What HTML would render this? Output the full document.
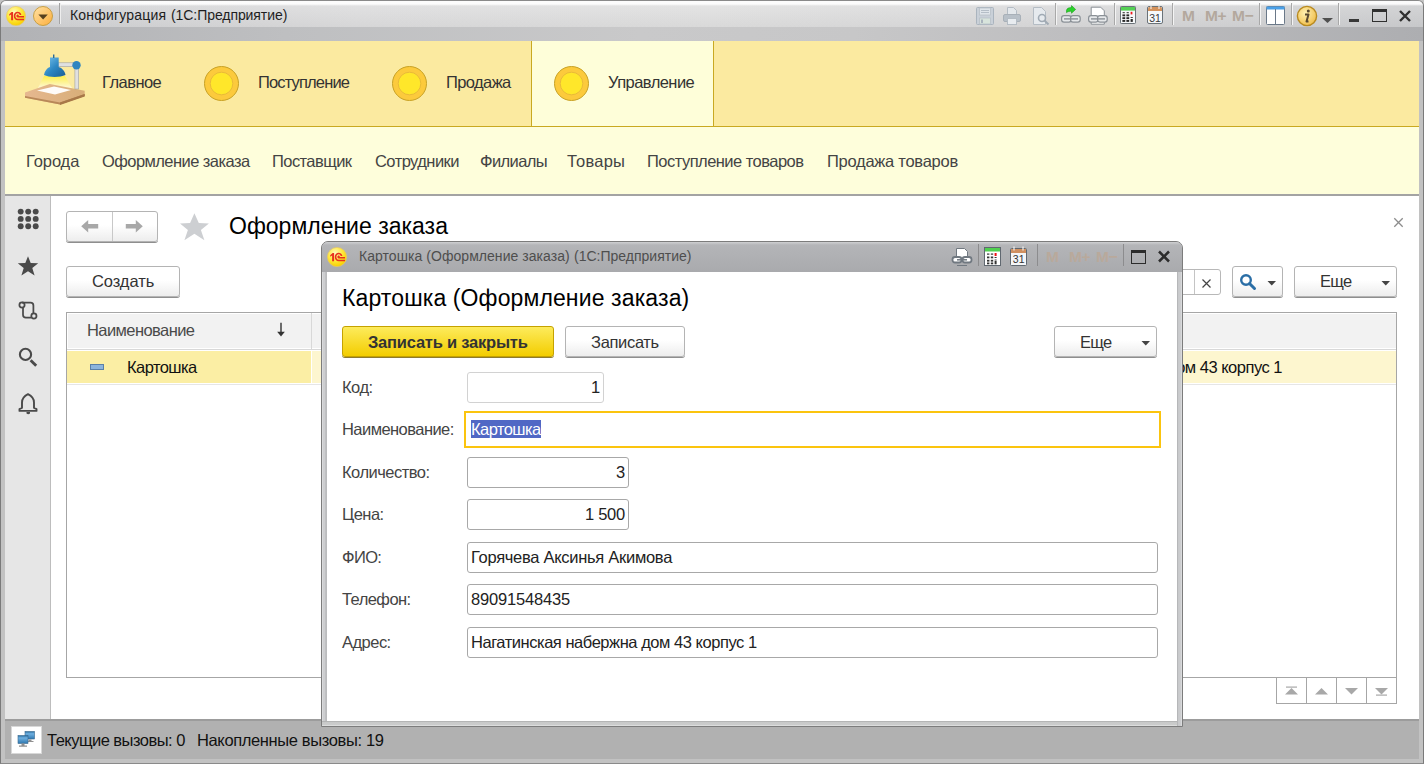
<!DOCTYPE html>
<html><head><meta charset="utf-8">
<style>
*{margin:0;padding:0;box-sizing:border-box}
html,body{width:1424px;height:764px;overflow:hidden}
body{position:relative;background:#c4c4c4;font-family:"Liberation Sans",sans-serif;color:#333}
.a{position:absolute}
.t{position:absolute;white-space:nowrap;line-height:1}
.btn{border:1px solid #b4b4b4;border-radius:3px;background:linear-gradient(#fff 0,#fff 45%,#ededed 100%);box-shadow:0 1px 0 #8e8e8e}
</style></head><body>
<!-- window frame -->
<div class="a" style="left:0;top:0;width:1424px;height:764px;background:#c2c2c2;border-left:1px solid #7a7a7a;border-right:1px solid #7a7a7a;border-top:1px solid #8a8a8a;border-bottom:1px solid #8a8a8a;border-radius:6px 6px 0 0"></div>
<!-- title bar -->
<div class="a" style="left:1px;top:1px;width:1422px;height:26px;border-radius:5px 5px 0 0;background:linear-gradient(rgba(255,255,255,0.9) 0,rgba(255,255,255,0.9) 3px,rgba(255,255,255,0) 5px,rgba(255,255,255,0) 100%),linear-gradient(rgba(255,255,255,0.12),rgba(0,0,0,0.04)),linear-gradient(90deg,#d2d3d5 0%,#dfdfe0 25%,#e2e2e2 50%,#dcdcdd 75%,#cfd0d2 100%)"></div>
<div class="a" style="left:1px;top:27px;width:1422px;height:14px;background:linear-gradient(90deg,#b1b2b5 0%,#bebfc1 20%,#c9c9ca 45%,#c7c7c8 60%,#bbbbbd 80%,#adaeb1 100%)"></div>


<!-- title bar content -->
<svg class="a" style="left:0px;top:0px" width="32" height="32" viewBox="0 0 32 32">
 <defs><radialGradient id="g1c" cx="40%" cy="30%" r="70%"><stop offset="0" stop-color="#fffbc0"/><stop offset="0.55" stop-color="#ffe83c"/><stop offset="1" stop-color="#f8d000"/></radialGradient></defs>
 <circle cx="16" cy="16" r="9.6" fill="url(#g1c)" stroke="#e6c866" stroke-width="0.7"/>
 <g fill="#e8321e">
 <path d="M9.2 14.2 L11.6 12 L13.1 12 L13.1 20.2 L11.1 20.2 L11.1 14.6 L9.2 15.7 Z"/>
 <path d="M21.4 15 C21 12.8 19.3 11.8 17.6 11.8 C15.2 11.8 13.8 13.8 13.8 16 C13.8 18.4 15.4 20.2 17.6 20.2 L24 20.2 L24 18.8 L17.6 18.8 C16.3 18.8 15.4 17.6 15.4 16 C15.4 14.5 16.3 13.3 17.6 13.3 C18.6 13.3 19.4 13.9 19.7 15 Z"/>
 <path d="M17.7 14.6 C16.9 14.6 16.4 15.2 16.4 16 C16.4 16.8 16.9 17.4 17.7 17.4 L24 17.4 L24 16.1 L18.9 16.1 C18.8 15.2 18.3 14.6 17.7 14.6 Z"/>
 </g>
</svg>
<svg class="a" style="left:27px;top:0px" width="32" height="32" viewBox="27 0 32 32">
 <defs><linearGradient id="gdd" x1="0" y1="0" x2="1" y2="1"><stop offset="0" stop-color="#ffe2a6"/><stop offset="1" stop-color="#fcae3c"/></linearGradient></defs>
 <circle cx="43" cy="16" r="9.5" fill="url(#gdd)" stroke="#c49a3a" stroke-width="0.9"/>
 <path d="M38.4 14.6 L47.8 14.6 L43.1 19.4 Z" fill="#56401e"/>
</svg>
<div class="a" style="left:59px;top:3px;width:1px;height:21px;background:#a4a4a4"></div><div class="a" style="left:60px;top:3px;width:1px;height:21px;background:#eeeeee"></div>
<div class="t" style="left:70px;top:8px;font-size:14px;color:#1e1e1e;letter-spacing:0.2px">Конфигурация</div>
<div class="t" style="left:171px;top:8px;font-size:14px;color:#1e1e1e;letter-spacing:-0.07px">(1С:Предприятие)</div>


<!-- title toolbar icons -->
<svg class="a" style="left:975px;top:6px" width="20" height="20" viewBox="0 0 20 20">
 <rect x="1.5" y="1.5" width="17" height="17" rx="1" fill="#c9d0d8" stroke="#aab4be"/>
 <rect x="4.5" y="2" width="11" height="7" fill="#dfe5ea" stroke="#b8c0c8" stroke-width="0.8"/>
 <path d="M6 4.5h8M6 6.5h8" stroke="#aab4be" stroke-width="0.8"/>
 <rect x="4.5" y="12" width="11" height="6" fill="#d8e4dc" stroke="#b8c0c8" stroke-width="0.8"/>
 <rect x="6" y="13.5" width="2" height="3.5" fill="#aab4be"/>
</svg>
<svg class="a" style="left:1002px;top:6px" width="20" height="20" viewBox="0 0 20 20">
 <path d="M5.5 1.5h6l3 3v5h-9z" fill="#e4e8ec" stroke="#b4bcc4"/>
 <rect x="1.5" y="8.5" width="17" height="7" rx="1.5" fill="#b8c0c8" stroke="#a8b0b8"/>
 <rect x="5.5" y="12.5" width="9" height="6" fill="#e8ecf0" stroke="#b4bcc4"/>
</svg>
<svg class="a" style="left:1031px;top:6px" width="20" height="20" viewBox="0 0 20 20">
 <path d="M2.5 1.5h8l4 4v13h-12z" fill="#e6eaee" stroke="#b4bcc4"/>
 <circle cx="11" cy="12" r="3.5" fill="none" stroke="#a0aab4" stroke-width="1.6"/>
 <path d="M13.5 14.5l4 4" stroke="#a0aab4" stroke-width="2"/>
</svg>
<div class="a" style="left:1055px;top:3px;width:2px;height:22px;background:linear-gradient(90deg,#a8a8a8 50%,#f4f4f4 50%)"></div>
<div class="a" style="left:1114px;top:3px;width:2px;height:22px;background:linear-gradient(90deg,#a8a8a8 50%,#f4f4f4 50%)"></div>
<svg class="a" style="left:1055px;top:2px" width="115" height="26" viewBox="1055 2 115 26">
 <path d="M1066.5 10.2 C1067 8.2 1069 7.6 1071.5 7.6 L1071.5 5.6 L1075.6 9.4 L1071.5 13.2 L1071.5 11.2 C1069.5 11.2 1067.8 11.6 1066.5 12.6 Z" fill="#2ad22a" stroke="#16a016" stroke-width="0.6"/>
 <g fill="#e6e8ea" stroke="#8a9096" stroke-width="1.2">
  <rect x="1061.6" y="15.6" width="9.6" height="6.6" rx="2.4"/><rect x="1070.6" y="15.6" width="9.6" height="6.6" rx="2.4"/>
 </g>
 <path d="M1064 18.9h14" stroke="#8a9096" stroke-width="1.4"/>
 <path d="M1091.2 7.2h9.5l3.6 3.6v13.4h-13.1z" fill="#fff" stroke="#8a9096" stroke-width="1"/>
 <g fill="#e6e8ea" stroke="#8a9096" stroke-width="1.2">
  <rect x="1088.6" y="15.6" width="9.6" height="6.6" rx="2.4"/><rect x="1097.6" y="15.6" width="9.6" height="6.6" rx="2.4"/>
 </g>
 <path d="M1091 18.9h14" stroke="#8a9096" stroke-width="1.4"/>
 <rect x="1120.5" y="6.5" width="15" height="17" rx="0.8" fill="#f6f8fa" stroke="#6a7278" stroke-width="1"/>
 <rect x="1121" y="7" width="14" height="3.6" fill="#55d055"/>
 <g fill="#2a2a2a">
  <rect x="1122.6" y="12.2" width="2.2" height="1"/><rect x="1126.6" y="12.2" width="2.2" height="1"/>
  <rect x="1122.4" y="14.4" width="2.8" height="1.9"/><rect x="1126.4" y="14.4" width="2.8" height="1.9"/>
  <rect x="1122.4" y="17.2" width="2.8" height="1.9"/><rect x="1126.4" y="17.2" width="2.8" height="1.9"/><rect x="1130.6" y="17" width="2.2" height="0.9"/>
  <rect x="1122.4" y="20" width="2.8" height="1.9"/><rect x="1126.4" y="20" width="2.8" height="1.9"/><rect x="1130.6" y="19" width="2.2" height="2.9"/>
 </g>
 <rect x="1130.6" y="11.8" width="1.8" height="2.6" fill="#ee1a1a"/>
 <rect x="1147.5" y="6.5" width="15" height="17" rx="1.5" fill="#f6f8fa" stroke="#6a7278" stroke-width="1"/>
 <path d="M1148 11 L1148 8.5 Q1148 7 1149.5 7 L1160.5 7 Q1162 7 1162 8.5 L1162 11 Z" fill="#d4925c"/>
 <path d="M1151 6v3M1159 6v3" stroke="#f4f4f4" stroke-width="1.1"/>
 <text x="1155" y="21.8" font-family="Liberation Sans" font-size="10.5" text-anchor="middle" fill="#3a3a3a">31</text>
</svg>
<div class="a" style="left:1172px;top:3px;width:2px;height:22px;background:linear-gradient(90deg,#a8a8a8 50%,#f4f4f4 50%)"></div>
<div class="t" style="left:1182px;top:8px;font-size:15.5px;font-weight:bold;color:#b3a89d">M</div>
<div class="t" style="left:1205px;top:8px;font-size:15.5px;font-weight:bold;color:#b3a89d;letter-spacing:-0.4px">M+</div>
<div class="t" style="left:1232px;top:8px;font-size:15.5px;font-weight:bold;color:#b3a89d;letter-spacing:-0.4px">M&minus;</div>
<div class="a" style="left:1259px;top:3px;width:2px;height:22px;background:linear-gradient(90deg,#a8a8a8 50%,#f4f4f4 50%)"></div>
<svg class="a" style="left:1265px;top:5px" width="21" height="21" viewBox="0 0 21 21">
 <rect x="1.5" y="1.5" width="18" height="18" rx="1" fill="#fff" stroke="#6a7888"/>
 <rect x="1.5" y="1.5" width="18" height="3" fill="#4aa0e8"/>
 <path d="M10.5 4v15" stroke="#6a7888" stroke-width="1"/>
</svg>
<div class="a" style="left:1291px;top:3px;width:2px;height:22px;background:linear-gradient(90deg,#a8a8a8 50%,#f4f4f4 50%)"></div>
<svg class="a" style="left:1296px;top:5px" width="22" height="22" viewBox="0 0 22 22">
 <defs><radialGradient id="ginf" cx="40%" cy="35%" r="65%"><stop offset="0" stop-color="#fff0b0"/><stop offset="1" stop-color="#f0c050"/></radialGradient></defs>
 <circle cx="11" cy="11" r="9.6" fill="url(#ginf)" stroke="#b88a20" stroke-width="1.4"/>
 <circle cx="12.3" cy="6" r="1.5" fill="#5a4a30"/>
 <path d="M9 9.5h3.5l-2 7h2" fill="none" stroke="#5a4a30" stroke-width="2" stroke-linejoin="round"/>
</svg>
<svg class="a" style="left:1321px;top:16px" width="13" height="8" viewBox="0 0 13 8"><path d="M1 2h11l-5.5 5z" fill="#505050"/></svg>
<div class="a" style="left:1338px;top:3px;width:2px;height:22px;background:linear-gradient(90deg,#a8a8a8 50%,#f4f4f4 50%)"></div>
<div class="a" style="left:1349px;top:19px;width:10px;height:2.5px;background:#383838"></div>
<div class="a" style="left:1372px;top:9px;width:15px;height:13px;border:1.5px solid #303030;border-top-width:3px"></div>
<svg class="a" style="left:1398px;top:9px" width="14" height="14" viewBox="0 0 14 14"><path d="M2 2l10 10M12 2l-10 10" stroke="#303030" stroke-width="2.4"/></svg>

<!-- section panel -->
<div class="a" style="left:5px;top:41px;width:1414px;height:86px;background:#fbeaa0;border-bottom:1px solid #c9a921"></div>
<div class="a" style="left:531px;top:41px;width:183px;height:85px;background:#fefed9;border-left:1px solid #c9a921;border-right:1px solid #c9a921"></div>


<!-- section items -->
<svg class="a" style="left:22px;top:52px" width="66" height="56" viewBox="0 0 66 56">
 <defs>
  <linearGradient id="lshade" x1="0" y1="0" x2="1" y2="1"><stop offset="0" stop-color="#7cc4ec"/><stop offset="0.5" stop-color="#2d88c4"/><stop offset="1" stop-color="#1a5e94"/></linearGradient>
  <linearGradient id="lboard" x1="0" y1="0" x2="1" y2="0"><stop offset="0" stop-color="#e6b890"/><stop offset="1" stop-color="#d8ae78"/></linearGradient>
  <linearGradient id="llight" x1="0" y1="0" x2="0" y2="1"><stop offset="0" stop-color="#fff040"/><stop offset="1" stop-color="#fffae0"/></linearGradient>
 </defs>
 <path d="M22 24 L43 24 L50 36 L16 36 Z" fill="url(#llight)" opacity="0.85"/>
 <path d="M3 40.5 L27.8 32 L62.7 38.8 L62.7 44 L38 52.5 L3 45.7 Z" fill="url(#lboard)"/>
 <path d="M3 44 L38 50.5 L62.7 42 L62.7 44 L38 52.5 L3 45.7 Z" fill="#b88858"/>
 <path d="M38 50.5 L62.7 42 L62.7 44.5 L38 53 Z" fill="#a87848"/>
 <path d="M15 38.5 L32 34.5 L49 38 L33 42.5 Z" fill="#ffffff" opacity="0.95"/>
 <rect x="52.9" y="13" width="3.8" height="24" fill="#e0e0e0" stroke="#a0a0a0" stroke-width="0.6"/>
 <rect x="36" y="10.8" width="16" height="3.8" fill="#e0e0e0" stroke="#a0a0a0" stroke-width="0.6"/>
 <circle cx="54.5" cy="13.3" r="4.2" fill="#2f85c0"/>
 <path d="M28 5.5 L36.7 5.5 L36.7 15 C40 16 43 19 43.5 23 C38 25.5 27 25.5 22 23 C22.5 19 25 16 28 15 Z" fill="url(#lshade)"/>
 <rect x="31" y="2.5" width="1.4" height="3.5" fill="#2a6a98"/>
</svg>
<div class="t" style="left:102px;top:74px;font-size:16.5px;color:#333;letter-spacing:-0.545px">Главное</div>
<svg class="a" style="left:203px;top:65px" width="37" height="37" viewBox="0 0 37 37"><circle cx="18.5" cy="18.5" r="17" fill="#fcca3c" stroke="#c8a226" stroke-width="1"/><circle cx="18.5" cy="18.5" r="11.3" fill="#ffe72a" stroke="#e6b63a" stroke-width="0.9"/></svg>
<div class="t" style="left:258px;top:74px;font-size:16.5px;color:#333;letter-spacing:-0.854px">Поступление</div>
<svg class="a" style="left:391px;top:65px" width="37" height="37" viewBox="0 0 37 37"><circle cx="18.5" cy="18.5" r="17" fill="#fcca3c" stroke="#c8a226" stroke-width="1"/><circle cx="18.5" cy="18.5" r="11.3" fill="#ffe72a" stroke="#e6b63a" stroke-width="0.9"/></svg>
<div class="t" style="left:446px;top:74px;font-size:16.5px;color:#333;letter-spacing:-0.596px">Продажа</div>
<svg class="a" style="left:553px;top:65px" width="37" height="37" viewBox="0 0 37 37"><circle cx="18.5" cy="18.5" r="17" fill="#fcca3c" stroke="#c8a226" stroke-width="1"/><circle cx="18.5" cy="18.5" r="11.3" fill="#ffe72a" stroke="#e6b63a" stroke-width="0.9"/></svg>
<div class="t" style="left:608px;top:74px;font-size:16.5px;color:#333;letter-spacing:-0.556px">Управление</div>

<!-- function panel -->
<div class="a" style="left:5px;top:127px;width:1414px;height:69px;background:#fefedb;border-bottom:2px solid #a3a3a3"></div>


<!-- function items -->
<div class="t fi" id="fi0" style="left:26px;top:153px;font-size:16.5px;color:#444;letter-spacing:-0.094px">Города</div>
<div class="t fi" id="fi1" style="left:102px;top:153px;font-size:16.5px;color:#444;letter-spacing:-0.560px">Оформление заказа</div>
<div class="t fi" id="fi2" style="left:272px;top:153px;font-size:16.5px;color:#444;letter-spacing:-0.571px">Поставщик</div>
<div class="t fi" id="fi3" style="left:375px;top:153px;font-size:16.5px;color:#444;letter-spacing:-0.541px">Сотрудники</div>
<div class="t fi" id="fi4" style="left:480px;top:153px;font-size:16.5px;color:#444;letter-spacing:-0.618px">Филиалы</div>
<div class="t fi" id="fi5" style="left:567px;top:153px;font-size:16.5px;color:#444;letter-spacing:0.227px">Товары</div>
<div class="t fi" id="fi6" style="left:647px;top:153px;font-size:16.5px;color:#444;letter-spacing:-0.530px">Поступление товаров</div>
<div class="t fi" id="fi7" style="left:827px;top:153px;font-size:16.5px;color:#444;letter-spacing:-0.266px">Продажа товаров</div>

<!-- sidebar -->
<div class="a" style="left:5px;top:196px;width:46px;height:523px;background:#e6e6e6;border-right:1px solid #bdbdbd"></div>
<!-- main content -->
<div class="a" style="left:51px;top:196px;width:1368px;height:523px;background:#fff"></div>



<!-- main form -->
<div class="a btn" style="left:66px;top:211px;width:92px;height:31px"></div>
<div class="a" style="left:112px;top:212px;width:1px;height:29px;background:#c8c8c8"></div>
<svg class="a" style="left:80px;top:219px" width="20" height="15" viewBox="0 0 20 15"><path d="M1.2 7.3 L8.2 1 L8.2 5.1 L18.2 5.1 L18.2 9.5 L8.2 9.5 L8.2 13.6 Z" fill="#a8a8a8"/></svg>
<svg class="a" style="left:125px;top:219px" width="20" height="15" viewBox="0 0 20 15"><path d="M17.8 7.3 L10.8 1 L10.8 5.1 L0.8 5.1 L0.8 9.5 L10.8 9.5 L10.8 13.6 Z" fill="#a8a8a8"/></svg>
<svg class="a" style="left:178px;top:211px" width="33" height="32" viewBox="0 0 33 32"><path d="M16.4 2.2 L20.8 12 L30.9 12.4 L22.9 19 L26.4 29.3 L16.4 22.8 L6.4 29.3 L9.9 19 L2 12.4 L12.1 12 Z" fill="#cdcfd2"/></svg>
<div class="t" style="left:229px;top:215px;font-size:23px;color:#000">Оформление заказа</div>
<svg class="a" style="left:1392px;top:216px" width="13" height="13" viewBox="0 0 13 13"><path d="M2.3 2.3 L10.7 10.7 M10.7 2.3 L2.3 10.7" stroke="#8c8c8c" stroke-width="1.3"/></svg>

<div class="a btn" style="left:66px;top:266px;width:114px;height:31px"></div>
<div class="t" style="left:92px;top:273px;font-size:16.5px;color:#333;letter-spacing:-0.08px">Создать</div>

<div class="a" style="left:1150px;top:269px;width:71px;height:26px;border:1px solid #b8b8b8;border-radius:3px;background:#fff"></div>
<div class="a" style="left:1194px;top:270px;width:1px;height:24px;background:#c4c4c4"></div>
<svg class="a" style="left:1201px;top:278px" width="11" height="11" viewBox="0 0 11 11"><path d="M1.5 1.5 L9.5 9.5 M9.5 1.5 L1.5 9.5" stroke="#444" stroke-width="1.2"/></svg>
<div class="a btn" style="left:1232px;top:266px;width:51px;height:31px"></div>
<svg class="a" style="left:1239px;top:273px" width="18" height="18" viewBox="0 0 18 18"><circle cx="7" cy="7" r="4.8" fill="none" stroke="#2a6ea6" stroke-width="2.4"/><path d="M10.5 10.5 L15.5 15.5" stroke="#2a6ea6" stroke-width="3" stroke-linecap="round"/></svg>
<svg class="a" style="left:1267px;top:280px" width="10" height="7" viewBox="0 0 10 7"><path d="M0.5 1 L9 1 L4.75 5.5 Z" fill="#444"/></svg>
<div class="a btn" style="left:1294px;top:266px;width:103px;height:31px"></div>
<div class="t" style="left:1320px;top:273px;font-size:16.5px;color:#333;letter-spacing:-0.677px">Еще</div>
<svg class="a" style="left:1381px;top:280px" width="10" height="7" viewBox="0 0 10 7"><path d="M0.5 1 L9 1 L4.75 5.5 Z" fill="#444"/></svg>

<!-- table -->
<div class="a" style="left:66px;top:312px;width:1331px;height:366px;border:1px solid #a6a6a6;background:#fff"></div>
<div class="a" style="left:67px;top:313px;width:1329px;height:36px;background:#f2f2f2;border-top:1px solid #fff;border-left:1px solid #fff;border-bottom:1px solid #fff"></div>
<div class="a" style="left:67px;top:349px;width:1329px;height:1px;background:#d8d8d8"></div>
<div class="a" style="left:311px;top:313px;width:1px;height:36px;background:#d8d8d8"></div>
<div class="a" style="left:67px;top:351px;width:244px;height:32px;background:#fbeea4"></div>
<div class="a" style="left:312px;top:351px;width:1084px;height:32px;background:#fdf6cf"></div>
<div class="a" style="left:67px;top:384px;width:1329px;height:1px;background:#e6e6e6"></div>
<div class="t" style="left:87px;top:322px;font-size:16.5px;color:#4a4a4a;letter-spacing:-0.578px">Наименование</div>
<svg class="a" style="left:275px;top:322px" width="12" height="16" viewBox="0 0 12 16"><path d="M6 0.8 L6 11" stroke="#333" stroke-width="1.4"/><path d="M2.2 9.8 L9.8 9.8 L6 14.5 Z" fill="#333"/></svg>
<div class="a" style="left:90px;top:364px;width:14px;height:6px;background:#8cb4dc;border:1px solid #5a80a8"></div>
<div class="t" style="left:127px;top:359px;font-size:16.5px;color:#111;letter-spacing:-0.562px">Картошка</div>
<div class="t" style="left:1167px;top:359px;font-size:16.5px;color:#111;letter-spacing:-0.494px">дом 43 корпус 1</div>

<!-- pager -->
<div class="a" style="left:1276px;top:677px;width:121px;height:27px;border:1px solid #a6a6a6;background:#fff"></div>
<div class="a" style="left:1306px;top:677px;width:1px;height:27px;background:#a6a6a6"></div>
<div class="a" style="left:1336px;top:677px;width:1px;height:27px;background:#a6a6a6"></div>
<div class="a" style="left:1366px;top:677px;width:1px;height:27px;background:#a6a6a6"></div>
<svg class="a" style="left:1276px;top:677px" width="121" height="27" viewBox="1276 677 121 27" fill="#a8a8a8">
 <rect x="1286" y="686.5" width="11" height="1.2"/><path d="M1285 694.5 L1291.5 688 L1298 694.5 Z"/>
 <path d="M1315 694.5 L1321.5 688 L1328 694.5 Z"/>
 <path d="M1345 688 L1358 688 L1351.5 694.5 Z"/>
 <path d="M1375 688 L1388 688 L1381.5 694.5 Z"/><rect x="1376" y="694.5" width="11" height="1.2"/>
</svg>

<!-- sidebar icons -->
<svg class="a" style="left:5px;top:196px" width="45" height="230" viewBox="5 196 45 230">
 <g fill="#4a4a4a">
  <circle cx="20.7" cy="211.6" r="2.95"/><circle cx="28.2" cy="211.6" r="2.95"/><circle cx="35.7" cy="211.6" r="2.95"/>
  <circle cx="20.7" cy="218.9" r="2.95"/><circle cx="28.2" cy="218.9" r="2.95"/><circle cx="35.7" cy="218.9" r="2.95"/>
  <circle cx="20.7" cy="226.2" r="2.95"/><circle cx="28.2" cy="226.2" r="2.95"/><circle cx="35.7" cy="226.2" r="2.95"/>
  <path d="M28 256.2 L30.7 263 L38.2 263.3 L32.3 268.1 L34.6 275.6 L28 271.3 L21.4 275.6 L23.7 268.1 L17.8 263.3 L25.3 263 Z"/>
 </g>
 <g fill="none" stroke="#4a4a4a" stroke-width="1.75">
  <path d="M22 302.6 L30.5 302.6 Q33.4 302.6 33.4 305.5 L33.4 313.2"/>
  <path d="M23 307.6 L23 314.8 Q23 317.7 25.9 317.7 L31.2 317.7"/>
  <circle cx="22" cy="305" r="2.6"/>
  <circle cx="33.9" cy="315.9" r="2.6"/>
  <circle cx="25.5" cy="354.4" r="5.6" stroke-width="2.1"/>
  <path d="M28 394.2 C23.5 396.5 22 399.5 22 402.5 L22 407.8 L19.5 409 L19.5 410.9 L36.5 410.9 L36.5 409 L34 407.8 L34 402.5 C34 399.5 32.5 396.5 28 394.2 Z" stroke-width="1.9" stroke-linejoin="round"/>
 </g>
 <path d="M31.6 359.2 L37.2 364.8 L35.2 366.8 L29.6 361.2 Z" fill="#4a4a4a"/>
 <path d="M26.5 412 L30 412 L30 413.5 Q28.2 415 26.5 413.5 Z" fill="#4a4a4a"/>
</svg>

<!-- status bar -->
<div class="a" style="left:5px;top:719px;width:1414px;height:40px;background:#b1b1b1;border-top:2px solid #9c9c9c"></div>


<!-- status content -->
<div class="a" style="left:11px;top:726px;width:31px;height:28px;background:#fff;border:1px solid #d8d8d8"></div>
<svg class="a" style="left:15px;top:730px" width="24" height="20" viewBox="0 0 24 20">
 <defs><linearGradient id="gmon" x1="0" y1="0" x2="0" y2="1"><stop offset="0" stop-color="#2a6ea0"/><stop offset="0.3" stop-color="#6fb0e0"/><stop offset="1" stop-color="#2f78b0"/></linearGradient></defs>
 <rect x="10" y="1.5" width="9.5" height="7.5" fill="url(#gmon)" stroke="#3a6a90" stroke-width="0.6"/>
 <path d="M13.5 9.5h3v1.5h2v1h-7v-1h2z" fill="#909090"/>
 <rect x="3" y="5.5" width="10" height="8" fill="url(#gmon)" stroke="#3a6a90" stroke-width="0.6"/>
 <path d="M6.5 13.5h3v2h2.5v1.2h-8v-1.2h2.5z" fill="#909090"/>
</svg>
<div class="t" style="left:47px;top:732px;font-size:16.5px;color:#111;letter-spacing:-0.522px">Текущие вызовы: 0</div>
<div class="t" style="left:197px;top:732px;font-size:16.5px;color:#111;letter-spacing:-0.366px">Накопленные вызовы: 19</div>

<!-- dialog -->
<div class="a" style="left:321px;top:241px;width:862px;height:486px;background:#c9cacc;border:1px solid #7c7c7c;border-radius:7px 7px 0 0"></div>
<div class="a" style="left:322px;top:242px;width:860px;height:30px;background:linear-gradient(#cfd0d2 0,#b4b5b8 3px,#a9aaad 100%);border-radius:6px 6px 0 0"></div>
<div class="a" style="left:327px;top:272px;width:850px;height:449px;background:#fff"></div>
<div class="a" style="left:322px;top:272px;width:5px;height:449px;background:linear-gradient(90deg,#d9dadc 0,#d9dadc 1px,#cdced0 1px,#cdced0 3px,#c1c2c4 3px,#b9babc 5px)"></div>
<div class="a" style="left:1177px;top:272px;width:5px;height:454px;background:linear-gradient(90deg,#b6b7b9 0,#b6b7b9 1px,#c7c8ca 1px,#cdced0 4px,#d9dadc 4px)"></div>
<div class="a" style="left:322px;top:721px;width:855px;height:5px;background:linear-gradient(#b4b5b5 0,#b4b5b5 1px,#c8c9c9 1px,#cbcccc 4px,#dcdddd 4px)"></div>



<!-- dialog content -->
<svg class="a" style="left:321px;top:241px" width="32" height="32" viewBox="0 0 32 32">
 <circle cx="16" cy="16" r="9.6" fill="url(#g1c)" stroke="#e6c866" stroke-width="0.7"/>
 <g fill="#e8321e">
 <path d="M9.2 14.2 L11.6 12 L13.1 12 L13.1 20.2 L11.1 20.2 L11.1 14.6 L9.2 15.7 Z"/>
 <path d="M21.4 15 C21 12.8 19.3 11.8 17.6 11.8 C15.2 11.8 13.8 13.8 13.8 16 C13.8 18.4 15.4 20.2 17.6 20.2 L24 20.2 L24 18.8 L17.6 18.8 C16.3 18.8 15.4 17.6 15.4 16 C15.4 14.5 16.3 13.3 17.6 13.3 C18.6 13.3 19.4 13.9 19.7 15 Z"/>
 <path d="M17.7 14.6 C16.9 14.6 16.4 15.2 16.4 16 C16.4 16.8 16.9 17.4 17.7 17.4 L24 17.4 L24 16.1 L18.9 16.1 C18.8 15.2 18.3 14.6 17.7 14.6 Z"/>
 </g>
</svg>
<div class="t" style="left:359px;top:249px;font-size:14px;color:#4e4e4e;letter-spacing:0.05px">Картошка (Оформление заказа)</div>
<div class="t" style="left:574px;top:249px;font-size:14px;color:#4e4e4e;letter-spacing:0px">(1С:Предприятие)</div>
<svg class="a" style="left:951px;top:247px" width="22" height="20" viewBox="0 0 22 20">
 <path d="M5.5 1.5h8l3 3v8h-11z" fill="#fff" stroke="#707880"/>
 <rect x="1.5" y="10" width="9" height="5.5" rx="2.5" fill="#fff" stroke="#707880" stroke-width="1.8"/>
 <rect x="11.5" y="10" width="9" height="5.5" rx="2.5" fill="#fff" stroke="#707880" stroke-width="1.8"/>
 <path d="M6 12.8h10" stroke="#707880" stroke-width="1.5"/>
 <path d="M6 18.5h10" stroke="#707880" stroke-width="1"/>
</svg>
<div class="a" style="left:978px;top:244px;width:1px;height:22px;background:#8c8c8e"></div>
<svg class="a" style="left:984px;top:247px" width="17" height="19" viewBox="0 0 17 19">
 <rect x="0.5" y="0.5" width="16" height="18" fill="#fff" stroke="#606870"/>
 <rect x="1" y="1" width="15" height="3.5" fill="#50d050"/>
 <g fill="#333"><rect x="3" y="6.5" width="2.4" height="1.2"/><rect x="6.8" y="6.5" width="2.4" height="1.2"/>
 <rect x="3" y="9.5" width="2.4" height="1.8"/><rect x="6.8" y="9.5" width="2.4" height="1.8"/><rect x="10.6" y="10" width="2" height="1"/>
 <rect x="3" y="12.8" width="2.4" height="1.8"/><rect x="6.8" y="12.8" width="2.4" height="1.8"/><rect x="10.6" y="12.5" width="2" height="1"/>
 <rect x="3" y="15.5" width="2.4" height="1.8"/><rect x="6.8" y="15.5" width="2.4" height="1.8"/><rect x="10.6" y="14" width="2" height="3.3"/></g>
 <rect x="10.6" y="6" width="2" height="3" fill="#ee1010"/>
</svg>
<svg class="a" style="left:1010px;top:246px" width="18" height="20" viewBox="0 0 18 20">
 <rect x="0.5" y="2.5" width="16" height="17" rx="1" fill="#f4f6f8" stroke="#606870"/>
 <rect x="1" y="3" width="15" height="4" fill="#d09060"/>
 <path d="M4 0.5v4M13 0.5v4" stroke="#f0f0f0" stroke-width="1.2"/>
 <text x="8.7" y="17.3" font-family="Liberation Sans" font-size="10.5" text-anchor="middle" fill="#333">31</text>
</svg>
<div class="a" style="left:1037px;top:244px;width:1px;height:22px;background:#8c8c8e"></div>
<div class="t" style="left:1046px;top:249px;font-size:15.5px;font-weight:bold;color:#b9a99b">M</div>
<div class="t" style="left:1069px;top:249px;font-size:15.5px;font-weight:bold;color:#b9a99b;letter-spacing:-0.5px">M+</div>
<div class="t" style="left:1096px;top:249px;font-size:15.5px;font-weight:bold;color:#b9a99b;letter-spacing:-0.5px">M&minus;</div>
<div class="a" style="left:1123px;top:244px;width:1px;height:22px;background:#8c8c8e"></div>
<div class="a" style="left:1131px;top:250px;width:15px;height:14px;border:1.5px solid #2c2c2c;border-top-width:3px"></div>
<svg class="a" style="left:1157px;top:250px" width="14" height="13" viewBox="0 0 14 13"><path d="M2 1.5l10 10M12 1.5l-10 10" stroke="#2c2c2c" stroke-width="2.5"/></svg>

<div class="t" style="left:342px;top:287px;font-size:23px;color:#000;letter-spacing:0.12px">Картошка (Оформление заказа)</div>
<div class="a" style="left:342px;top:326px;width:212px;height:31px;border:1px solid #c5a200;border-radius:3px;background:linear-gradient(#fdeb5c,#f3cd00);box-shadow:0 1px 0 #8c7a30"></div>
<div class="t" style="left:368px;top:334px;font-size:16.5px;font-weight:bold;color:#333;letter-spacing:-0.22px">Записать и закрыть</div>
<div class="a btn" style="left:565px;top:326px;width:120px;height:31px"></div>
<div class="t" style="left:591px;top:334px;font-size:16.5px;color:#333;letter-spacing:-0.333px">Записать</div>
<div class="a btn" style="left:1054px;top:326px;width:103px;height:31px"></div>
<div class="t" style="left:1080px;top:334px;font-size:16.5px;color:#333;letter-spacing:-0.677px">Еще</div>
<svg class="a" style="left:1141px;top:340px" width="10" height="7" viewBox="0 0 10 7"><path d="M0.5 1 L9 1 L4.75 5.5 Z" fill="#444"/></svg>

<div class="t" style="left:342px;top:379px;font-size:16.5px;color:#444;letter-spacing:-0.492px">Код:</div>
<div class="a" style="left:467px;top:372px;width:137px;height:31px;border:1px solid #d2d2d2;border-radius:3px"></div>
<div class="t" style="left:591px;top:379px;font-size:16.5px;color:#222;letter-spacing:-0.562px">1</div>

<div class="t" style="left:342px;top:421px;font-size:16.5px;color:#444;letter-spacing:-0.554px">Наименование:</div>
<div class="a" style="left:464px;top:411px;width:697px;height:37px;border:2px solid #fbc40e"></div>
<div class="a" style="left:471px;top:420px;width:70px;height:18px;background:#5068c5"></div>
<div class="t" style="left:471px;top:421px;font-size:16.5px;color:#fff;letter-spacing:-0.562px">Картошка</div>

<div class="t" style="left:342px;top:464px;font-size:16.5px;color:#444;letter-spacing:-0.514px">Количество:</div>
<div class="a" style="left:467px;top:457px;width:162px;height:31px;border:1px solid #a8a8a8;border-radius:3px"></div>
<div class="t" style="left:616px;top:464px;font-size:16.5px;color:#222;letter-spacing:-0.562px">3</div>

<div class="t" style="left:342px;top:506px;font-size:16.5px;color:#444;letter-spacing:-0.537px">Цена:</div>
<div class="a" style="left:467px;top:499px;width:162px;height:31px;border:1px solid #a8a8a8;border-radius:3px"></div>
<div class="t" style="left:585px;top:506px;font-size:16.5px;color:#222;letter-spacing:-0.300px">1 500</div>

<div class="t" style="left:342px;top:549px;font-size:16.5px;color:#444;letter-spacing:-0.633px">ФИО:</div>
<div class="a" style="left:467px;top:542px;width:691px;height:31px;border:1px solid #a8a8a8;border-radius:3px"></div>
<div class="t" style="left:471px;top:549px;font-size:16.5px;color:#222;letter-spacing:-0.285px">Горячева Аксинья Акимова</div>

<div class="t" style="left:342px;top:591px;font-size:16.5px;color:#444;letter-spacing:-0.555px">Телефон:</div>
<div class="a" style="left:467px;top:584px;width:691px;height:31px;border:1px solid #a8a8a8;border-radius:3px"></div>
<div class="t" style="left:471px;top:591px;font-size:16.5px;color:#222;letter-spacing:-0.177px">89091548435</div>

<div class="t" style="left:342px;top:634px;font-size:16.5px;color:#444;letter-spacing:-0.523px">Адрес:</div>
<div class="a" style="left:467px;top:627px;width:691px;height:31px;border:1px solid #a8a8a8;border-radius:3px"></div>
<div class="t" style="left:471px;top:634px;font-size:16.5px;color:#222;letter-spacing:-0.459px">Нагатинская набержна дом 43 корпус 1</div>

</body></html>
